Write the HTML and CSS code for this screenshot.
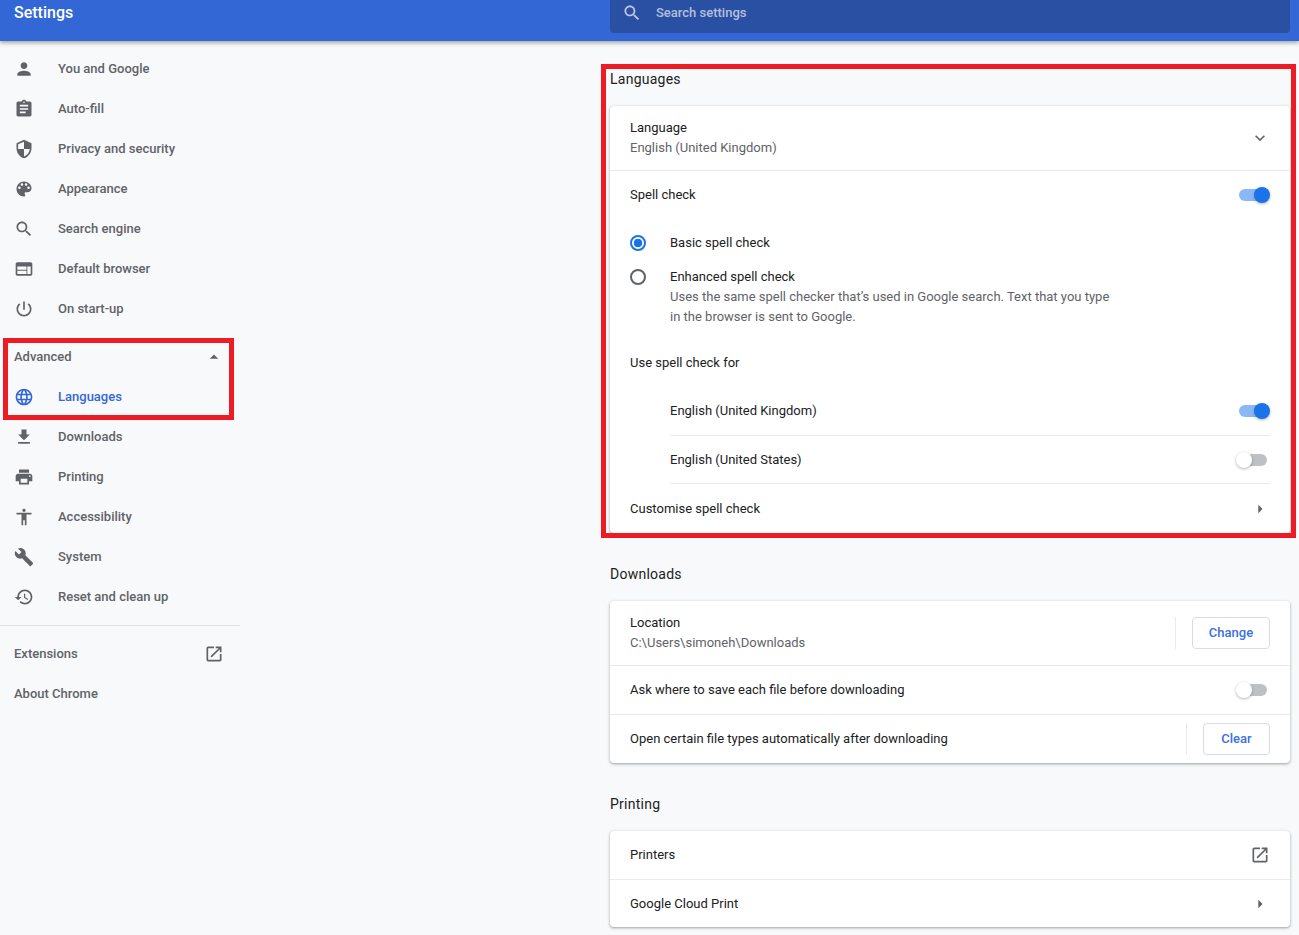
FILE: index.html
```html
<!DOCTYPE html>
<html lang="en">
<head>
  <meta charset="UTF-8">
  <title>Settings - Languages</title>
  <meta name="viewport" content="width=device-width, initial-scale=1.0">
  <link rel="stylesheet" href="styles.css">
</head>
<body>

<svg class="sprite" xmlns="http://www.w3.org/2000/svg">
  <symbol id="i-person" viewBox="0 0 24 24"><path d="M12 12c2.21 0 4-1.79 4-4s-1.79-4-4-4-4 1.79-4 4 1.79 4 4 4zm0 2c-2.67 0-8 1.34-8 4v2h16v-2c0-2.66-5.33-4-8-4z"/></symbol>
  <symbol id="i-assignment" viewBox="0 0 24 24"><path d="M19 3h-4.18C14.4 1.84 13.3 1 12 1c-1.3 0-2.4.84-2.82 2H5c-1.1 0-2 .9-2 2v14c0 1.1.9 2 2 2h14c1.1 0 2-.9 2-2V5c0-1.1-.9-2-2-2zm-7 0c.55 0 1 .45 1 1s-.45 1-1 1-1-.45-1-1 .45-1 1-1zm2 14H7v-2h7v2zm3-4H7v-2h10v2zm0-4H7V7h10v2z"/></symbol>
  <symbol id="i-security" viewBox="0 0 24 24"><path d="M12 1L3 5v6c0 5.55 3.84 10.74 9 12 5.16-1.26 9-6.45 9-12V5l-9-4zm0 10.99h7c-.53 4.12-3.28 7.79-7 8.94V12H5V6.3l7-3.11v8.8z"/></symbol>
  <symbol id="i-palette" viewBox="0 0 24 24"><path d="M12 3c-4.97 0-9 4.03-9 9s4.03 9 9 9c.83 0 1.5-.67 1.5-1.5 0-.39-.15-.74-.39-1.01-.23-.26-.38-.61-.38-.99 0-.83.67-1.5 1.5-1.5H16c2.76 0 5-2.24 5-5 0-4.42-4.03-8-9-8zm-5.5 9c-.83 0-1.5-.67-1.5-1.5S5.67 9 6.5 9 8 9.67 8 10.5 7.33 12 6.5 12zm3-4C8.67 8 8 7.33 8 6.5S8.67 5 9.5 5s1.5.67 1.5 1.5S10.33 8 9.5 8zm5 0c-.83 0-1.5-.67-1.5-1.5S13.67 5 14.5 5s1.5.67 1.5 1.5S15.33 8 14.5 8zm3 4c-.83 0-1.5-.67-1.5-1.5S16.67 9 17.5 9s1.5.67 1.5 1.5-.67 1.5-1.5 1.5z"/></symbol>
  <symbol id="i-search" viewBox="0 0 24 24"><path d="M15.5 14h-.79l-.28-.27C15.41 12.59 16 11.11 16 9.5 16 5.91 13.09 3 9.5 3S3 5.91 3 9.5 5.91 16 9.5 16c1.61 0 3.09-.59 4.23-1.57l.27.28v.79l5 4.99L20.49 19l-4.99-5zm-6 0C7.01 14 5 11.99 5 9.5S7.01 5 9.5 5 14 7.01 14 9.5 11.99 14 9.5 14z"/></symbol>
  <symbol id="i-web" viewBox="0 0 24 24"><path d="M20 4H4c-1.1 0-1.99.9-1.99 2L2 18c0 1.1.9 2 2 2h16c1.1 0 2-.9 2-2V6c0-1.1-.9-2-2-2zm-5 14H4v-4h11v4zm0-5H4V9h11v4zm5 5h-4V9h4v9z"/></symbol>
  <symbol id="i-power" viewBox="0 0 24 24"><path d="M13 3h-2v10h2V3zm4.83 2.17l-1.42 1.42C17.99 7.86 19 9.81 19 12c0 3.87-3.13 7-7 7s-7-3.13-7-7c0-2.19 1.01-4.14 2.58-5.42L6.17 5.17C4.23 6.82 3 9.26 3 12c0 4.97 4.03 9 9 9s9-4.03 9-9c0-2.74-1.23-5.18-3.17-6.83z"/></symbol>
  <symbol id="i-language" viewBox="0 0 24 24"><path d="M11.99 2C6.47 2 2 6.48 2 12s4.47 10 9.99 10C17.52 22 22 17.52 22 12S17.52 2 11.99 2zm6.93 6h-2.95c-.32-1.25-.78-2.45-1.38-3.56 1.84.63 3.37 1.91 4.33 3.56zM12 4.04c.83 1.2 1.48 2.53 1.91 3.96h-3.82c.43-1.43 1.08-2.76 1.91-3.96zM4.26 14C4.1 13.36 4 12.69 4 12s.1-1.36.26-2h3.38c-.08.66-.14 1.32-.14 2 0 .68.06 1.34.14 2H4.26zm.82 2h2.95c.32 1.25.78 2.45 1.38 3.56-1.84-.63-3.37-1.9-4.33-3.56zm2.95-8H5.08c.96-1.66 2.49-2.93 4.33-3.56C8.81 5.55 8.35 6.75 8.03 8zM12 19.96c-.83-1.2-1.48-2.53-1.91-3.96h3.82c-.43 1.43-1.08 2.76-1.91 3.96zM14.34 14H9.66c-.09-.66-.16-1.32-.16-2 0-.68.07-1.35.16-2h4.68c.09.65.16 1.32.16 2 0 .68-.07 1.34-.16 2zm.25 5.56c.6-1.11 1.06-2.31 1.38-3.56h2.95c-.96 1.65-2.49 2.93-4.33 3.56zM16.36 14c.08-.66.14-1.32.14-2 0-.68-.06-1.34-.14-2h3.38c.16.64.26 1.31.26 2s-.1 1.36-.26 2h-3.38z"/></symbol>
  <symbol id="i-download" viewBox="0 0 24 24"><path d="M19 9h-4V3H9v6H5l7 7 7-7zM5 18v2h14v-2H5z"/></symbol>
  <symbol id="i-print" viewBox="0 0 24 24"><path d="M19 8H5c-1.66 0-3 1.34-3 3v6h4v4h12v-4h4v-6c0-1.66-1.34-3-3-3zm-3 11H8v-5h8v5zm3-7c-.55 0-1-.45-1-1s.45-1 1-1 1 .45 1 1-.45 1-1 1zm-1-9H6v4h12V3z"/></symbol>
  <symbol id="i-accessibility" viewBox="0 0 24 24"><path d="M12 2c1.1 0 2 .9 2 2s-.9 2-2 2-2-.9-2-2 .9-2 2-2zm9 7h-6v13h-2v-6h-2v6H9V9H3V7h18v2z"/></symbol>
  <symbol id="i-build" viewBox="0 0 24 24"><path d="M22.7 19l-9.1-9.1c.9-2.3.4-5-1.5-6.9-2-2-5-2.4-7.4-1.3L9 6 6 9 1.6 4.7C.4 7.1.9 10.1 2.9 12.1c1.9 1.9 4.6 2.4 6.9 1.5l9.1 9.1c.4.4 1 .4 1.4 0l2.3-2.3c.5-.4.5-1.1.1-1.4z"/></symbol>
  <symbol id="i-restore" viewBox="0 0 24 24"><path d="M13 3c-4.97 0-9 4.03-9 9H1l3.89 3.89.07.14L9 12H6c0-3.87 3.13-7 7-7s7 3.13 7 7-3.13 7-7 7c-1.93 0-3.68-.79-4.94-2.06l-1.42 1.42C8.27 19.99 10.51 21 13 21c4.97 0 9-4.03 9-9s-4.03-9-9-9zm-1 5v5l4.28 2.54.72-1.21-3.5-2.08V8H12z"/></symbol>
  <symbol id="i-open" viewBox="0 0 24 24"><path d="M19 19H5V5h7V3H5c-1.11 0-2 .9-2 2v14c0 1.1.89 2 2 2h14c1.1 0 2-.9 2-2v-7h-2v7zM14 3v2h3.59l-9.83 9.83 1.41 1.41L19 6.41V10h2V3h-7z"/></symbol>
  <symbol id="i-expand" viewBox="0 0 24 24"><path d="M16.59 8.59L12 13.17 7.41 8.59 6 10l6 6 6-6z"/></symbol>
  <symbol id="i-drop-up" viewBox="0 0 24 24"><path d="M7 14l5-5 5 5z"/></symbol>
  <symbol id="i-right" viewBox="0 0 24 24"><path d="M10 17l5-5-5-5v10z"/></symbol>
</svg>

<header class="topbar">
  <div class="topbar-title">Settings</div>
  <div class="search-box">
    <svg class="icon"><use href="#i-search"/></svg>
    <span>Search settings</span>
  </div>
</header>

<div class="layout">
  <nav class="sidebar">
    <a class="nav-item"><svg class="icon"><use href="#i-person"/></svg>You and Google</a>
    <a class="nav-item"><svg class="icon"><use href="#i-assignment"/></svg>Auto-fill</a>
    <a class="nav-item"><svg class="icon"><use href="#i-security"/></svg>Privacy and security</a>
    <a class="nav-item"><svg class="icon"><use href="#i-palette"/></svg>Appearance</a>
    <a class="nav-item"><svg class="icon"><use href="#i-search"/></svg>Search engine</a>
    <a class="nav-item"><svg class="icon"><use href="#i-web"/></svg>Default browser</a>
    <a class="nav-item"><svg class="icon"><use href="#i-power"/></svg>On start-up</a>
    <a class="nav-link advanced">Advanced<svg class="icon"><use href="#i-drop-up"/></svg></a>
    <a class="nav-item active"><svg class="icon"><use href="#i-language"/></svg>Languages</a>
    <a class="nav-item"><svg class="icon"><use href="#i-download"/></svg>Downloads</a>
    <a class="nav-item"><svg class="icon"><use href="#i-print"/></svg>Printing</a>
    <a class="nav-item"><svg class="icon"><use href="#i-accessibility"/></svg>Accessibility</a>
    <a class="nav-item"><svg class="icon"><use href="#i-build"/></svg>System</a>
    <a class="nav-item"><svg class="icon"><use href="#i-restore"/></svg>Reset and clean up</a>
    <div class="nav-divider"></div>
    <a class="nav-link">Extensions<svg class="icon"><use href="#i-open"/></svg></a>
    <a class="nav-link">About Chrome</a>
  </nav>

  <main class="content">
    <section class="section">
      <h2>Languages</h2>
      <div class="card">
        <div class="row two-line">
          <div>
            <div>Language</div>
            <div class="secondary">English (United Kingdom)</div>
          </div>
          <svg class="icon"><use href="#i-expand"/></svg>
        </div>
        <div class="row border">
          <div>Spell check</div>
          <span class="toggle on"></span>
        </div>
        <div class="radio-row basic">
          <span class="radio checked"></span>
          <div>Basic spell check</div>
        </div>
        <div class="radio-row enhanced">
          <span class="radio"></span>
          <div>
            <div>Enhanced spell check</div>
            <div class="secondary">Uses the same spell checker that’s used in Google search. Text that you type<br>in the browser is sent to Google.</div>
          </div>
        </div>
        <div class="row">Use spell check for</div>
        <div class="sublist">
          <div class="row">
            <div>English (United Kingdom)</div>
            <span class="toggle on"></span>
          </div>
          <div class="row border">
            <div>English (United States)</div>
            <span class="toggle"></span>
          </div>
        </div>
        <div class="row customise">
          <div>Customise spell check</div>
          <svg class="icon"><use href="#i-right"/></svg>
        </div>
      </div>
    </section>

    <section class="section">
      <h2>Downloads</h2>
      <div class="card">
        <div class="row two-line">
          <div>
            <div>Location</div>
            <div class="secondary">C:\Users\simoneh\Downloads</div>
          </div>
          <div class="action">
            <button class="btn change">Change</button>
          </div>
        </div>
        <div class="row border">
          <div>Ask where to save each file before downloading</div>
          <span class="toggle"></span>
        </div>
        <div class="row border">
          <div>Open certain file types automatically after downloading</div>
          <div class="action">
            <button class="btn clear">Clear</button>
          </div>
        </div>
      </div>
    </section>

    <section class="section printing">
      <h2>Printing</h2>
      <div class="card">
        <div class="row">
          <div>Printers</div>
          <svg class="icon"><use href="#i-open"/></svg>
        </div>
        <div class="row border">
          <div>Google Cloud Print</div>
          <svg class="icon"><use href="#i-right"/></svg>
        </div>
      </div>
    </section>
  </main>
</div>

<!-- red highlight boxes drawn over the screenshot -->
<div class="highlight highlight-nav"></div>
<div class="highlight highlight-main"></div>

</body>
</html>
```

FILE: styles.css
```css
* { box-sizing: border-box; }
html, body {
  height: 935px;
  overflow: hidden;
}
body {
  margin: 0;
  position: relative;
  background: #f8f9fa;
  font-family: Roboto, "Liberation Sans", sans-serif;
  font-size: 13px;
  line-height: 20px;
  color: #202124;
}
.sprite { display: none; }
.icon {
  width: 20px;
  height: 20px;
  flex: none;
  fill: #5f6368;
}

/* top bar */
.topbar {
  position: relative;
  z-index: 1;
  display: flex;
  height: 41px;
  background: #3367d6;
  box-shadow: 0 2px 4px rgba(60, 64, 67, .45);
}
.topbar-title {
  width: 610px;
  padding: 3px 0 0 14px;
  font-size: 16px;
  font-weight: 500;
  color: #fff;
}
.search-box {
  display: flex;
  align-items: center;
  gap: 14px;
  width: 680px;
  height: 33px;
  padding: 0 0 8px 12px;
  border-radius: 0 0 4px 4px;
  background: #2a50a4;
  color: rgba(255, 255, 255, .65);
  font-weight: 500;
}
.search-box .icon { fill: rgba(255, 255, 255, .7); }

/* layout */
.layout { display: flex; }
.sidebar {
  flex: none;
  width: 240px;
  padding-top: 8px;
}
.content {
  width: 680px;
  margin-left: 370px;
  padding-top: 28px;
}

/* sidebar */
.nav-item, .nav-link {
  display: flex;
  align-items: center;
  height: 40px;
  font-weight: 500;
  color: #5f6368;
}
.nav-item {
  gap: 24px;
  padding-left: 14px;
}
.nav-link {
  justify-content: space-between;
  padding: 0 16px 0 14px;
}
.nav-item.active { color: #3367d6; }
.nav-item.active .icon { fill: #3367d6; }
.advanced { margin-top: 8px; }
.nav-divider {
  height: 1px;
  margin: 8px 0;
  background: #e2e3e5;
}

/* cards */
.section { margin-bottom: 31px; }
.section h2 {
  margin: 0 0 17px;
  font-size: 14px;
  font-weight: 400;
  letter-spacing: .25px;
  line-height: 20px;
}
.card {
  border-radius: 4px;
  background: #fff;
  box-shadow: 0 1px 2px rgba(60, 64, 67, .3), 0 1px 3px 1px rgba(60, 64, 67, .15);
}
.row {
  display: flex;
  align-items: center;
  justify-content: space-between;
  min-height: 48px;
  padding: 0 20px;
}
.row.two-line { padding-top: 12px; padding-bottom: 12px; }
.row.border { border-top: 1px solid #e8eaed; min-height: 49px; }
.printing .row.border { min-height: 48px; }
.secondary { color: #5f6368; }

/* radios */
.radio-row {
  display: flex;
  gap: 24px;
  padding: 0 20px;
}
.radio-row.basic {
  align-items: center;
  height: 47px;
}
.radio-row.enhanced {
  height: 73px;
  padding-top: 1px;
}
.radio {
  flex: none;
  width: 16px;
  height: 16px;
  margin-top: 2px;
  border: 2px solid #5f6368;
  border-radius: 50%;
  background: #fff;
}
.radio-row.basic .radio { margin-top: 0; }
.radio.checked {
  border-color: #1a73e8;
  background: radial-gradient(circle, #1a73e8 0 4px, #fff 4.6px);
}

/* toggles */
.toggle {
  position: relative;
  flex: none;
  width: 28px;
  height: 12px;
  margin-right: 3px;
  border-radius: 6px;
  background: #bdc1c6;
}
.toggle::after {
  content: "";
  position: absolute;
  top: -2px;
  left: -3px;
  width: 16px;
  height: 16px;
  border-radius: 50%;
  background: #fff;
  box-shadow: 0 1px 3px rgba(60, 64, 67, .4);
}
.toggle.on { background: #8ab8f4; }
.toggle.on::after {
  left: 15px;
  background: #1a73e8;
}

/* rows under the spell check heading are indented, their dividers too */
.sublist { margin: 0 20px 0 60px; }
.sublist .row { padding: 0; }
.sublist .row.border { border-bottom: 1px solid #e8eaed; }
.row.customise { min-height: 49px; }

/* buttons */
.action {
  display: flex;
  align-items: center;
  padding-left: 16px;
  border-left: 1px solid #e8eaed;
}
.btn {
  height: 32px;
  padding: 0 0 2px;
  border: 1px solid #dadce0;
  border-radius: 4px;
  background: #fff;
  font: 500 13px Roboto, "Liberation Sans", sans-serif;
  color: #3a70e2;
}
.btn.change { width: 78px; }
.btn.clear { width: 67px; }

/* red boxes */
.highlight {
  position: absolute;
  z-index: 2;
  border: 5px solid #ed1c24;
}
.highlight-nav {
  left: 3px;
  top: 338px;
  width: 231px;
  height: 82px;
}
.highlight-main {
  left: 601px;
  top: 64px;
  width: 695px;
  height: 474px;
}
```
